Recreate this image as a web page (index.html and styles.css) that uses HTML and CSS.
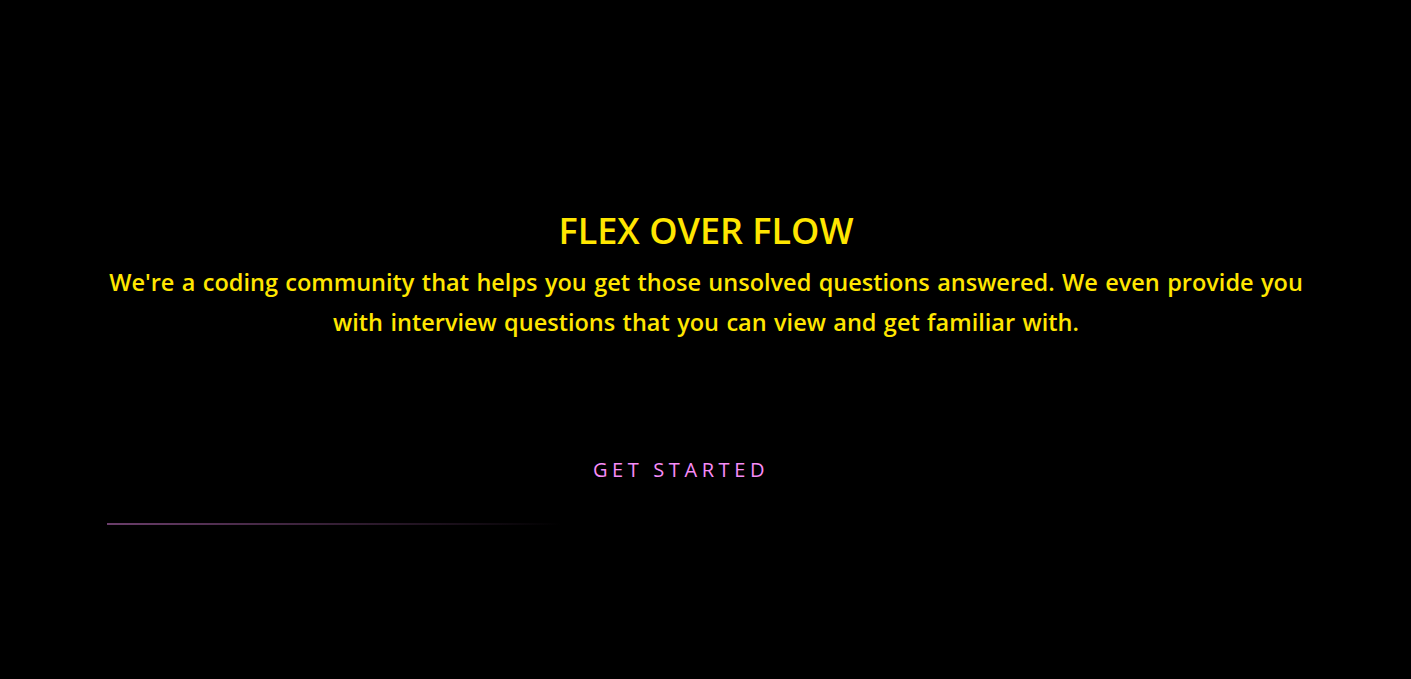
FILE: index.html
```html
<!DOCTYPE html>
<html lang="en">
<head>
<meta charset="utf-8">
<title>Flex Over Flow</title>
<link rel="stylesheet" href="styles.css">
</head>
<body>
<main class="hero">
  <h1 class="hero-title">FLEX OVER FLOW</h1>
  <p class="hero-text">We're a coding community that helps you get those unsolved questions answered. We even provide you with interview questions that you can view and get familiar with.</p>
  <a class="hero-button" href="#">GET STARTED</a>
  <div class="hero-line"></div>
</main>
</body>
</html>
```

FILE: styles.css
```css
html, body {
  margin: 0;
  padding: 0;
  background: #000;
  height: 100%;
}
body {
  font-family: "Open Sans", "Noto Sans", sans-serif;
}
.hero {
  box-sizing: border-box;
  padding: 209px 106px 0 107px;
  display: flex;
  flex-direction: column;
  align-items: center;
}
.hero-title {
  margin: 0;
  color: #ffe600;
  font-size: 36px;
  font-weight: 600;
  line-height: 44px;
  letter-spacing: 0;
}
.hero-text {
  margin: 9px 0 0;
  color: #ffe600;
  font-size: 23.5px;
  font-weight: 600;
  line-height: 40px;
  word-spacing: 1.3px;
  text-align: center;
}
.hero-button {
  margin-top: 116px;
  margin-right: 50px;
  color: #f78cf7;
  font-size: 20px;
  font-weight: 500;
  letter-spacing: 4.6px;
  text-decoration: none;
  line-height: 24px;
}
.hero-line {
  align-self: flex-start;
  margin-top: 41px;
  width: 454px;
  height: 2px;
  background: linear-gradient(to right, #6b3e6b, rgba(107, 62, 107, 0));
}
```
